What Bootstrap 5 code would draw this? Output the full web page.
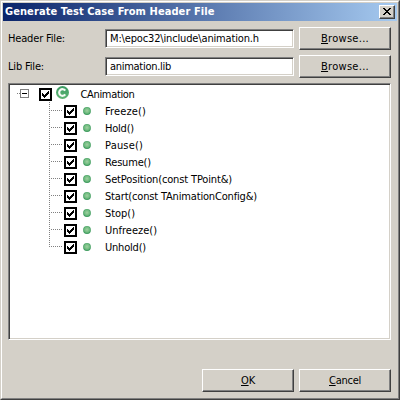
<!DOCTYPE html>
<html lang="en">
<head>
<meta charset="utf-8">
<title>Generate Test Case From Header File</title>
<link href="https://cdn.jsdelivr.net/npm/bootstrap@5.3.0/dist/css/bootstrap.min.css" rel="stylesheet">
<style>
body{width:400px;height:400px;margin:0;overflow:hidden;background:#d4d0c8;color:#000;font:11px/13px "DejaVu Sans Condensed","DejaVu Sans",sans-serif}
.dialog{width:400px;height:400px;border:1px solid;border-color:#d4d0c8 #404040 #404040 #d4d0c8;background:#d4d0c8}
.dialog-inner{height:398px;border:1px solid;border-color:#fff #808080 #808080 #fff;padding:1px}
.titlebar{height:18px;background:linear-gradient(90deg,#0a246a,#a6caf0);padding:0 2px 0 2px}
.titlebar h1{font:bold 11px/18px "DejaVu Sans Condensed","DejaVu Sans",sans-serif;color:#fff;white-space:nowrap}
.win-btn{height:23px;width:92px;padding:0;border:1px solid;border-color:#fff #404040 #404040 #fff;border-radius:0;background:#d4d0c8;color:#000;box-shadow:inset -1px -1px #808080;font:inherit;line-height:20px}
.win-btn u{text-underline-offset:1px;text-decoration-thickness:1px}
.close-btn{width:16px;height:14px;line-height:0}
.form-line{height:23px;margin-bottom:5px}
.form-line label{width:97px}
.win-field{width:189px;height:19px;min-height:0;padding:0 0 0 4px;border:1px solid;border-color:#808080 #fff #fff #808080;border-radius:0;box-shadow:inset 1px 1px #404040,inset -1px -1px #d4d0c8;background:#fff;color:#000;font:inherit;line-height:18px}
.fields{padding:6px 6px 0 5px}
.tree{width:383px;height:257px;margin-left:5px;background:#fff;border:1px solid;border-color:#808080 #fff #fff #808080;box-shadow:inset 1px 1px #404040,inset -1px -1px #d4d0c8;padding:1px}
.tree ul{margin:0}
.node{height:17px;white-space:nowrap}
.node .lbl{padding-top:1px}
.node svg,.close-btn svg{display:block;flex:none}
.footer-btns{margin:29px 6px 0 0;gap:5px}
.lbl{display:inline-block}
</style>
<script src="https://cdn.jsdelivr.net/npm/bootstrap@5.3.0/dist/js/bootstrap.bundle.min.js"></script>
</head>
<body>
<svg width="0" height="0" class="position-absolute" aria-hidden="true">
<defs>
<radialGradient id="ball" cx=".5" cy=".45" r=".55"><stop offset="0" stop-color="#a0d0a0"/><stop offset=".6" stop-color="#70bb80"/><stop offset="1" stop-color="#329455"/></radialGradient>
<linearGradient id="disc" x2="0" y2="1"><stop offset="0" stop-color="#3a9a62"/><stop offset="1" stop-color="#5fb573"/></linearGradient>
<g id="check"><path d="M1 1h11v11H1z" fill="#fff" stroke="#000" stroke-width="2" shape-rendering="crispEdges"/><path d="M3 5h1v1h1v1h1v-1h1v-1h1v-1h1v-1h1v3h-1v1h-1v1h-1v1h-1v1h-1v-1h-1v-1h-1z" shape-rendering="crispEdges"/></g>
<g id="branch" stroke="#808080" stroke-dasharray="1 1" shape-rendering="crispEdges"><path d="M12 8.5h12"/></g>
</defs>
</svg>
<main class="dialog"><div class="dialog-inner">
<header class="titlebar d-flex align-items-center justify-content-between">
<h1 class="m-0"><span class="lbl" data-w="209.5">Generate Test Case From Header File</span></h1>
<button class="btn win-btn close-btn" aria-label="Close"><svg width="14" height="12" shape-rendering="crispEdges"><path d="M3 2h2v1h1v1h2v-1h1v-1h2v1h-1v1h-1v1h-1v1h1v1h1v1h1v1h-2v-1h-1v-1h-2v1h-1v1h-2v-1h1v-1h1v-1h1v-1h-1v-1h-1v-1h-1z"/></svg></button>
</header>
<section class="fields">
<div class="form-line d-flex align-items-center"><label for="hdr"><span class="lbl" data-w="57">Header File:</span></label><div id="hdr" class="form-control win-field me-auto"><span class="lbl" data-w="149">M:\epoc32\include\animation.h</span></div><button class="btn win-btn"><span class="lbl" data-w="48"><u>B</u>rowse...</span></button></div>
<div class="form-line d-flex align-items-center"><label for="lib"><span class="lbl" data-w="36">Lib File:</span></label><div id="lib" class="form-control win-field me-auto"><span class="lbl" data-w="61">animation.lib</span></div><button class="btn win-btn"><span class="lbl" data-w="48"><u>B</u>rowse...</span></button></div>
</section>
<section class="tree">
<div class="node d-flex align-items-center"><svg width="70.5" height="17"><path d="M7 8.5h3" stroke="#808080" stroke-dasharray="1 1" shape-rendering="crispEdges"/><path d="M10.5 4.5h8v8h-8z" fill="#fff" stroke="#808080" shape-rendering="crispEdges"/><path d="M12 8.5h5" stroke="#000" shape-rendering="crispEdges"/><use href="#check" x="29" y="3"/><circle cx="52.5" cy="7.5" r="6.5" fill="url(#disc)"/><path d="M55.2 5.6A3.3 3.3 0 1 0 55.2 9.4" fill="none" stroke="#f4faf4" stroke-width="2.2"/></svg><span class="lbl" data-w="54">CAnimation</span></div>
<ul class="list-unstyled" id="methods"></ul>
</section>
<footer class="footer-btns d-flex justify-content-end"><button class="btn win-btn"><span class="lbl" data-w="14"><u>O</u>K</span></button><button class="btn win-btn"><span class="lbl" data-w="32"><u>C</u>ancel</span></button></footer>
</div></main>
<script>
const methods=[["Freeze()",41],["Hold()",29],["Pause()",38],["Resume()",46],["SetPosition(const TPoint&)",127],["Start(const TAnimationConfig&)",152],["Stop()",30],["Unfreeze()",52],["Unhold()",41]];
const list=document.getElementById("methods");
methods.forEach(([name,w],i)=>{
  const li=document.createElement("li");
  li.className="node d-flex align-items-center";
  li.innerHTML=`<svg width="95" height="17"><path d="M39.5 ${i%2}V${i===8?9:17}" stroke="#808080" stroke-dasharray="1 1" shape-rendering="crispEdges"/><use href="#branch" x="29"/><use href="#check" x="54" y="3"/><circle cx="77" cy="9" r="3.9" fill="url(#ball)"/></svg>`;
  const s=document.createElement("span");s.className="lbl";s.dataset.w=w;s.textContent=name;li.append(s);list.append(li);
});
// Tracks each label to its nominal dialog-font width.
document.querySelectorAll(".lbl").forEach(e=>{
  const n=e.textContent.length, d=(+e.dataset.w-e.getBoundingClientRect().width)/n;
  e.style.letterSpacing=d.toFixed(3)+"px";
});
</script>
</body>
</html>
